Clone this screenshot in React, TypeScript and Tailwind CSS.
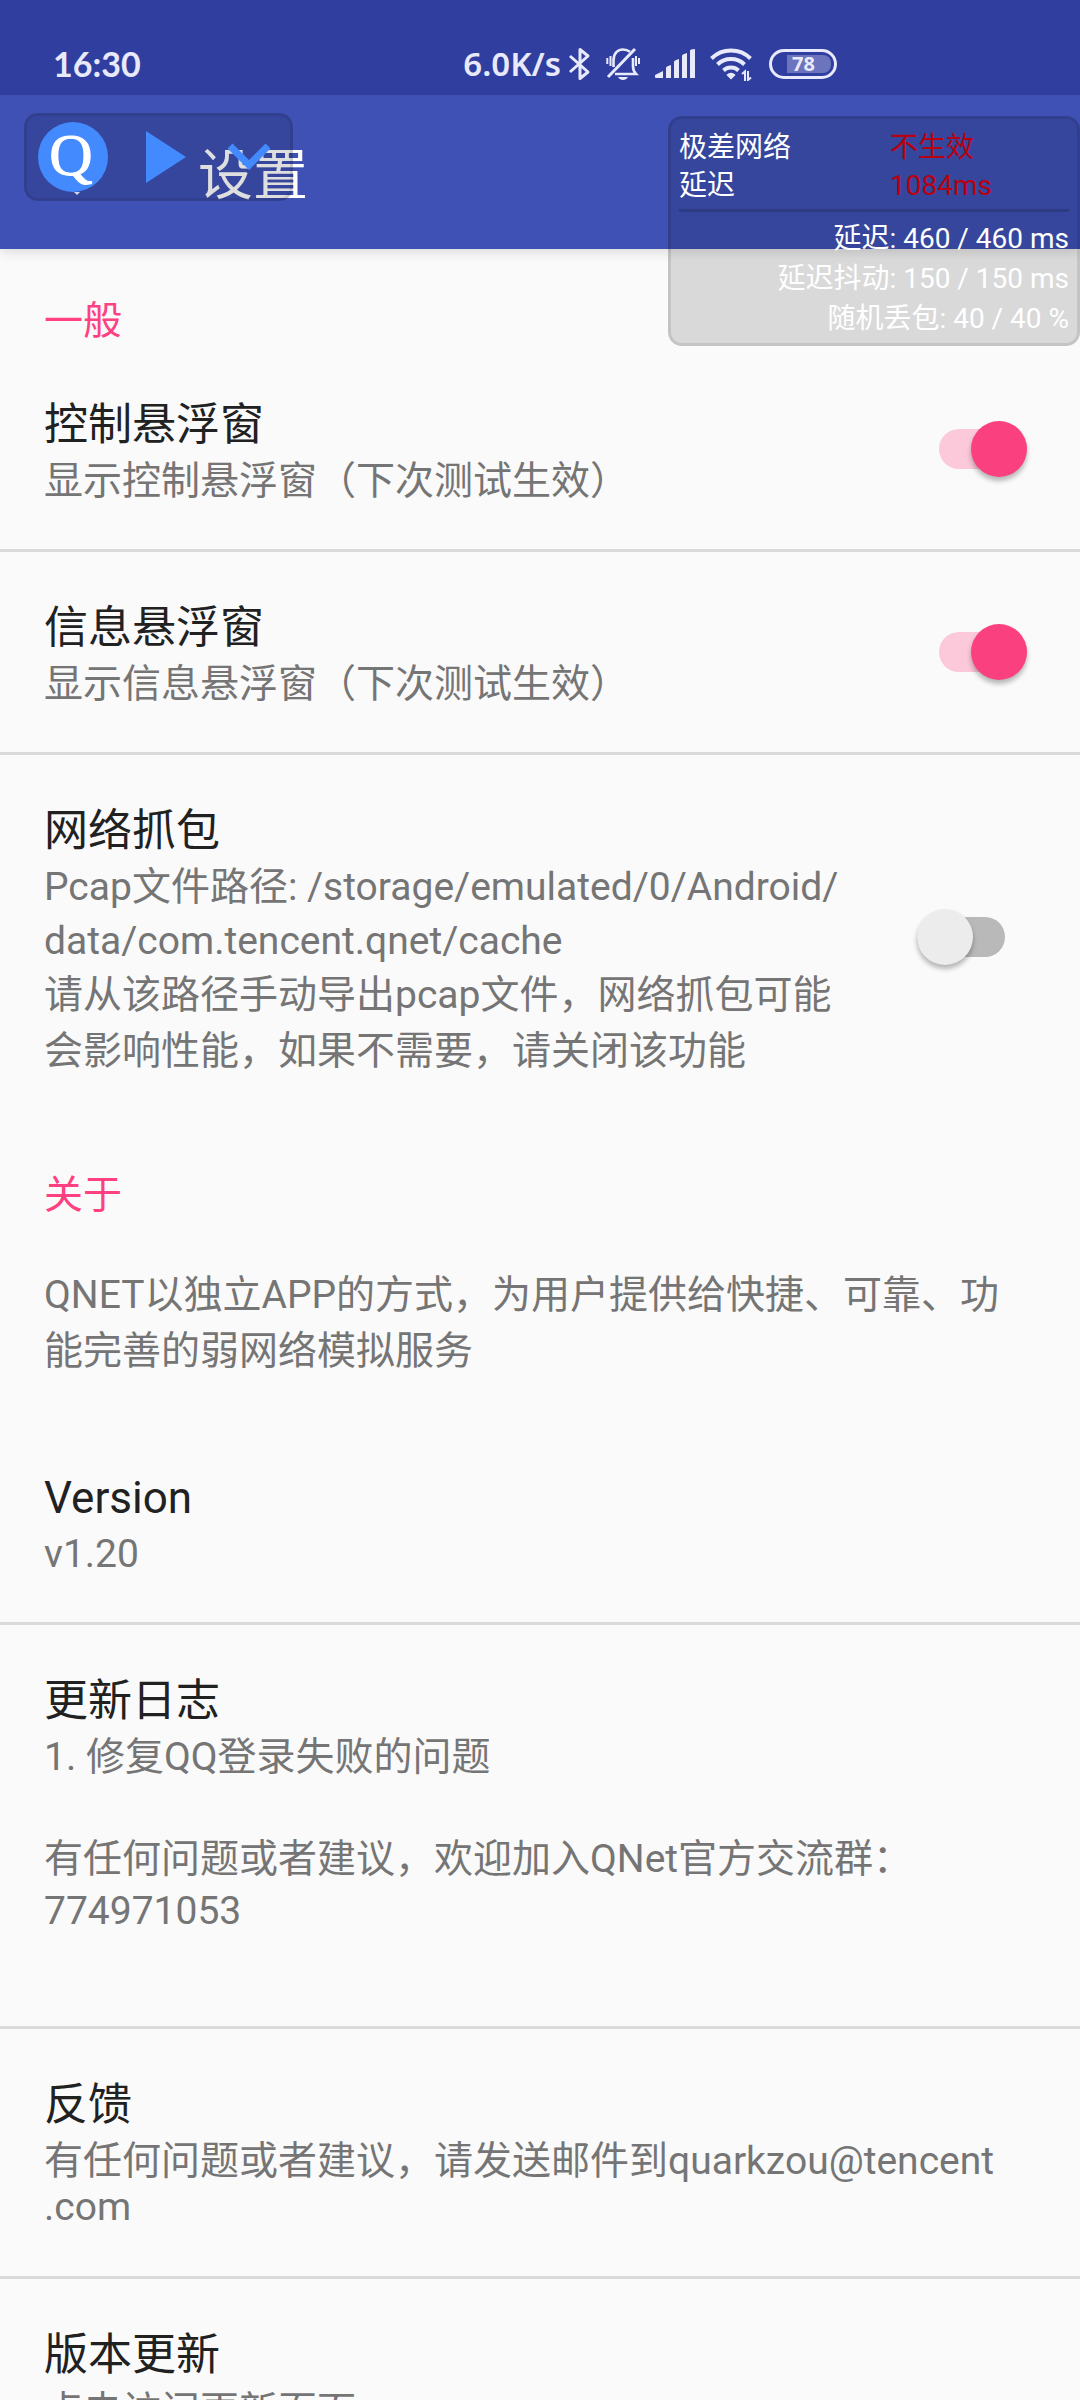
import { useState } from 'react'

type Line = { text: string; leading: string }

const CJK = 'leading-[56px]'

const Switch = ({ id, defaultChecked }: { id: string; defaultChecked: boolean }) => {
  const [checked, setChecked] = useState(defaultChecked)

  return (
    <input
      id={id}
      type="checkbox"
      role="switch"
      checked={checked}
      onChange={() => setChecked((prev) => !prev)}
      className="relative h-14 w-[110px] shrink-0 cursor-pointer appearance-none before:absolute before:top-2 before:left-0 before:h-10 before:w-[88px] before:rounded-full before:bg-[#b9b9b9] after:absolute after:top-0 after:left-0 after:size-14 after:rounded-full after:bg-[#ececec] after:shadow-[0_4px_5px_rgba(0,0,0,0.28)] checked:before:left-[22px] checked:before:bg-[#fbc9d9] checked:after:left-[54px] checked:after:bg-[#fb407f]"
    />
  )
}

const Category = ({ children }: { children: string }) => (
  <h2 className="px-11 pt-11 text-[39px] leading-[56px] text-[#ff4081]">{children}</h2>
)

const Summary = ({ lines }: { lines: Line[] }) => (
  <p className="text-[39px] text-[#757575]">
    {lines.map((line, i) => (
      <span key={i} className={`block ${line.leading}`}>
        {line.text || '\u00a0'}
      </span>
    ))}
  </p>
)

type RowProps = {
  title: string
  lines: Line[]
  switchId?: string
  on?: boolean
  divider?: boolean
  bottom?: string
}

const Row = ({ title, lines, switchId, on = false, divider = true, bottom = 'pb-10' }: RowProps) => (
  <section
    className={`flex items-center justify-between pr-[53px] pl-11 ${divider ? 'border-b-[3px] border-[#dadada]' : ''}`}
  >
    <div className={`min-w-0 pt-12 ${bottom}`}>
      <h3 className="text-[44px] leading-[56px] text-[#212121]">
        {switchId ? <label htmlFor={switchId}>{title}</label> : title}
      </h3>
      <Summary lines={lines} />
    </div>
    {switchId && <Switch id={switchId} defaultChecked={on} />}
  </section>
)

const StatusBar = () => (
  <div className="flex h-[95px] items-center justify-between bg-[#303f9f] pt-[33px] pr-[243px] pl-[53px] text-[#e8eafb]">
    <time className="font-['Lato'] text-[34px] leading-10 font-bold">16:30</time>
    <div className="flex items-center gap-[15px]">
      <div className="flex items-center gap-2">
        <span className="font-['Noto_Sans'] text-[33px] leading-10 font-semibold">6.0K/s</span>
        <svg width="22" height="34" viewBox="0 0 22 34" fill="none" stroke="currentColor" strokeWidth="3">
          <path d="M1 9 19 25 11 31.5V2.5L19 9 1 25" strokeLinejoin="round" />
        </svg>
      </div>
      <svg width="34" height="34" viewBox="0 0 34 34" fill="none" stroke="currentColor" strokeWidth="2.6">
        <path d="M7.500 20V13.500C7.500 6 12 2.500 17 2.500c3 0 5 .8 7 2.300M27 11v8c0 4 1 6 3 8H9" />
        <path d="M2 30 29 2" strokeWidth="3" />
        <path d="M1.300 11v6M4.500 9v10M30 9v10M33 11v6" strokeWidth="2" />
        <path d="M12 30h10c-1 2-3 3-5 3s-4-1-5-3z" fill="currentColor" stroke="none" />
      </svg>
      <svg width="40" height="30" viewBox="0 0 40 30" fill="currentColor">
        <path d="M0 26l8-4v7H1q-1 0-1-1zM11 19q0-1 1-1.500L16 16v13h-5zM19 13q0-1 1-1.500L24 10v19h-5zM27 7q0-1 1-1.500L32 4v25h-5zM35 2q0-1 1-1.500L40 0v29h-5z" />
      </svg>
      <svg width="44" height="34" viewBox="0 0 44 34" fill="none" stroke="currentColor" strokeWidth="4">
        <path d="M1.500 11.500a28 28 0 0 1 39 0M7.500 17.500a19.500 19.500 0 0 1 27 0M13.500 23.500a11 11 0 0 1 15 0" />
        <path d="M21 31.500l-3.500-3.500a5 5 0 0 1 7 0z" fill="currentColor" strokeWidth="1.500" />
        <path d="M32 27l3-2.500V34M38 24v9l3-2.500" strokeWidth="2" />
      </svg>
      <div className="flex h-[30px] w-[68px] items-center justify-end rounded-full border-[3px] border-current pr-[3px]">
        <span className="flex h-[18px] w-11 items-center rounded-r-lg bg-[#6b74bd] pl-[5px] font-['Noto_Sans'] text-[20px] leading-none font-bold">
          78
        </span>
      </div>
    </div>
  </div>
)

// floating window that starts and stops a test
const ControlWindow = () => (
  <div className="absolute top-[113px] left-6 flex h-[88px] w-[269px] items-center rounded-[14px] border-[3px] border-black/10 bg-black/13 pl-[11px]">
    <button type="button" aria-label="QNET">
      <svg width="70" height="76" viewBox="0 0 70 76">
        <path d="M36 73l3 3 3-3z" fill="#d5d9ee" />
        <circle cx="35" cy="38" r="35" fill="#448aff" />
        <text
          x="33"
          y="56"
          textAnchor="middle"
          fontFamily="Liberation Serif, serif"
          fontSize="60"
          fill="#fff"
          stroke="#fff"
        >
          Q
        </text>
      </svg>
    </button>
    <button type="button" aria-label="开始" className="ml-[38px]">
      <svg width="40" height="52" viewBox="0 0 40 52" fill="#448aff">
        <path d="M0 0l40 26L0 52z" />
      </svg>
    </button>
    <button type="button" aria-label="展开" className="ml-[41px]">
      <svg width="44" height="28" viewBox="0 0 44 28" fill="none" stroke="#448aff" strokeWidth="7">
        <path d="M3 3l19 19L41 3" />
      </svg>
    </button>
  </div>
)

const InfoWindow = () => (
  <aside className="absolute top-[116px] right-0 w-[412px] rounded-[14px] border-[3px] border-black/10 bg-black/13 px-2 pt-2.5 pb-1 text-[28px] text-white">
    <dl className="grid grid-cols-[211px_1fr] leading-[38px]">
      <dt>极差网络</dt>
      <dd className="text-[#b8000f]">不生效</dd>
      <dt>延迟</dt>
      <dd className="text-[#b8000f]">1084ms</dd>
    </dl>
    <hr className="mt-1 mb-[7px] border-t-[3px] border-black/15" />
    <ul className="text-right leading-10">
      <li>延迟: 460 / 460 ms</li>
      <li>延迟抖动: 150 / 150 ms</li>
      <li>随机丢包: 40 / 40 %</li>
    </ul>
  </aside>
)

const App = () => {
  return (
    <div
      lang="zh-CN"
      className="relative flex h-screen flex-col overflow-hidden bg-[#fafafa] font-['Roboto','Noto_Sans_CJK_SC',sans-serif]"
    >
      <header className="relative z-10 shadow-[0_2px_12px_rgba(0,0,0,0.15)]">
        <StatusBar />
        <div className="flex h-[154px] items-center bg-[#3f51b5] pt-1.5 pl-[198px]">
          <h1 className="text-[55px] leading-[60px] text-white">设置</h1>
        </div>
      </header>

      <main className="min-h-0 flex-1 overflow-y-auto [scrollbar-width:none]">
        <Category>一般</Category>
        <Row
          title="控制悬浮窗"
          lines={[{ text: '显示控制悬浮窗（下次测试生效）', leading: CJK }]}
          switchId="control-window"
          on
        />
        <Row
          title="信息悬浮窗"
          lines={[{ text: '显示信息悬浮窗（下次测试生效）', leading: CJK }]}
          switchId="info-window"
          on
        />
        <Row
          title="网络抓包"
          lines={[
            { text: 'Pcap文件路径: /storage/emulated/0/Android/', leading: CJK },
            { text: 'data/com.tencent.qnet/cache', leading: 'leading-[52px]' },
            { text: '请从该路径手动导出pcap文件，网络抓包可能', leading: CJK },
            { text: '会影响性能，如果不需要，请关闭该功能', leading: CJK },
          ]}
          switchId="pcap"
          divider={false}
        />

        <div className="mt-1">
          <Category>关于</Category>
        </div>
        <section className="px-11 pt-11 pb-[43px]">
          <Summary
            lines={[
              { text: 'QNET以独立APP的方式，为用户提供给快捷、可靠、功', leading: CJK },
              { text: '能完善的弱网络模拟服务', leading: CJK },
            ]}
          />
        </section>
        <Row title="Version" lines={[{ text: 'v1.20', leading: CJK }]} />
        <Row
          title="更新日志"
          lines={[
            { text: '1. 修复QQ登录失败的问题', leading: CJK },
            { text: '', leading: 'leading-[46px]' },
            { text: '有任何问题或者建议，欢迎加入QNet官方交流群：', leading: CJK },
            { text: '774971053', leading: 'leading-[48px]' },
          ]}
          bottom="pb-[91px]"
        />
        <Row
          title="反馈"
          lines={[
            { text: '有任何问题或者建议，请发送邮件到quarkzou@tencent', leading: CJK },
            { text: '.com', leading: 'leading-[36px]' },
          ]}
          bottom="pb-[51px]"
        />
        <Row title="版本更新" lines={[{ text: '点击访问更新页面', leading: CJK }]} />
      </main>

      <div className="relative z-20 order-first h-0">
        <ControlWindow />
        <InfoWindow />
      </div>
    </div>
  )
}

export default App
